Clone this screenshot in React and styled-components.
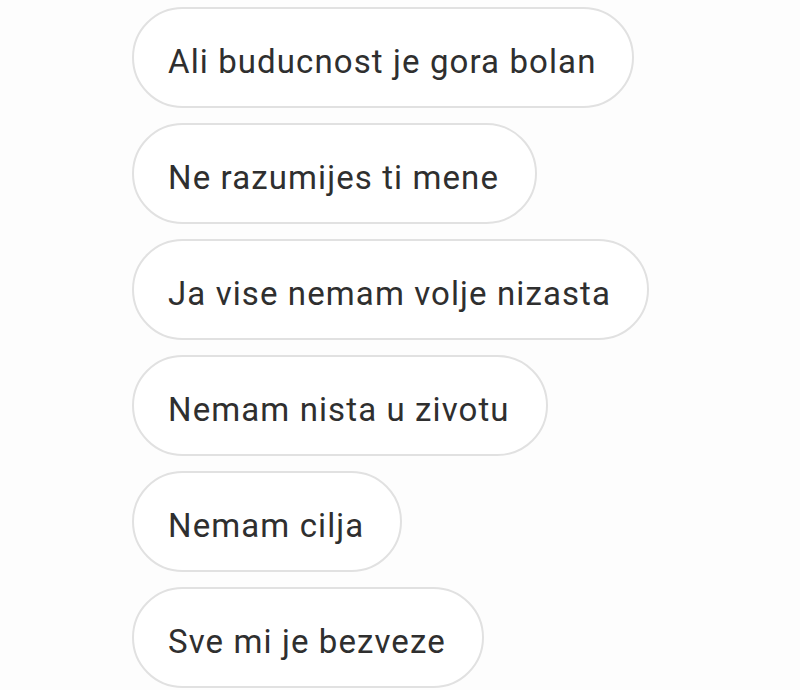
import React from "react";
import styled, { createGlobalStyle } from "styled-components";

const GlobalStyle = createGlobalStyle`
  html, body {
    margin: 0;
    padding: 0;
    background: #ffffff;
  }
`;

const messages = [
  "Ali buducnost je gora bolan",
  "Ne razumijes ti mene",
  "Ja vise nemam volje nizasta",
  "Nemam nista u zivotu",
  "Nemam cilja",
  "Sve mi je bezveze",
];

export default function App() {
  return (
    <>
      <GlobalStyle />
      <Chat>
        {messages.map((m) => (
          <Bubble key={m}>{m}</Bubble>
        ))}
      </Chat>
    </>
  );
}

const Chat = styled.div`
  width: 800px;
  height: 690px;
  overflow: hidden;
  box-sizing: border-box;
  padding: 7px 0 0 132px;
  display: flex;
  flex-direction: column;
  align-items: flex-start;
  gap: 15px;
  background: #fdfdfd;
`;

const Bubble = styled.div`
  box-sizing: border-box;
  height: 101px;
  padding: 7px 36px 0 34px;
  display: flex;
  align-items: center;
  border: 2px solid #e1e1e1;
  border-radius: 51px;
  background: #ffffff;
  font-family: Roboto, "Noto Sans", sans-serif;
  font-size: 33px;
  letter-spacing: 1.1px;
  color: #2f2f2f;
  white-space: nowrap;
  flex-shrink: 0;
`;
